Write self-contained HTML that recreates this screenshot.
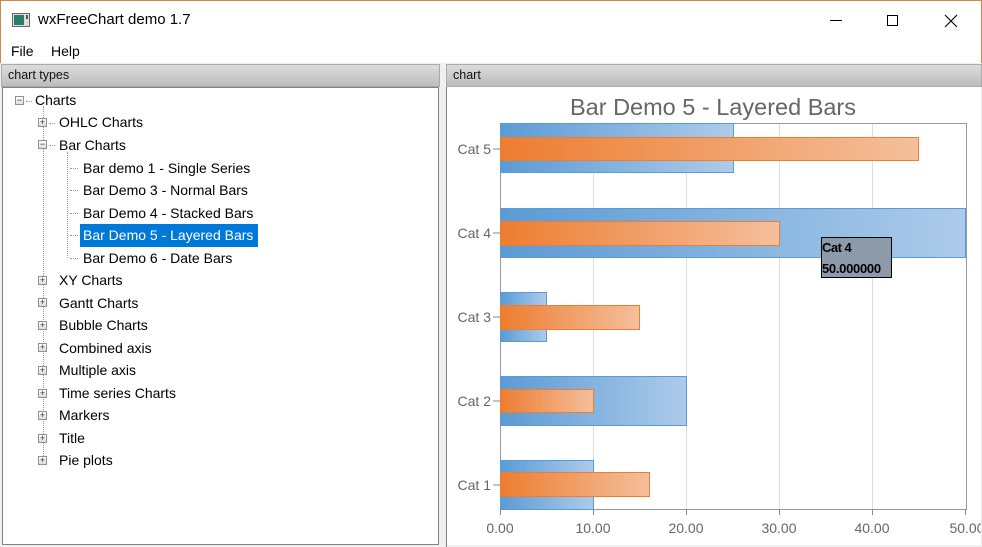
<!DOCTYPE html>
<html><head><style>
*{margin:0;padding:0;box-sizing:border-box}
body{width:982px;height:547px;overflow:hidden;background:#f0f0f0;font-family:"Liberation Sans",sans-serif;position:relative}
.title{position:absolute;left:0;top:0;width:982px;height:40px;background:#fff;border-left:1px solid #c9894f;border-top:1px solid #c9894f;border-right:1px solid #c9894f}
.menu{position:absolute;left:0;top:40px;width:982px;height:23px;background:#fff;border-left:1px solid #c9894f;border-right:1px solid #c9894f;font-size:14px}
.hdr{position:absolute;height:23px;background:linear-gradient(#dcdcdc,#bdbdbd);font-size:12.5px;color:#111;padding:3px 0 0 6px;border:1px solid #aaa}
.tree{position:absolute;left:2px;top:87px;width:437px;height:458px;background:#fff;border:1px solid #828282}
.it{position:absolute;font-size:14px;color:#000;line-height:20px;white-space:nowrap}
.bx{position:absolute;width:9px;height:9px;border:1px solid #919191;background:linear-gradient(#fff,#ddd);font-size:9px;line-height:7px;text-align:center;color:#333}
.dv{position:absolute;border-left:1px dotted #999}
.dh{position:absolute;border-top:1px dotted #999;width:8px}
</style></head><body>
<div class="title">
<svg style="position:absolute;left:11px;top:12px" width="18" height="14"><rect x="0.5" y="0.5" width="17" height="13" fill="#ddd" stroke="#666"/><rect x="2" y="2" width="10" height="10" fill="#2d7b6a"/><rect x="14" y="2" width="2" height="4" fill="#555"/></svg>
<div style="position:absolute;left:37px;top:10px;font-size:15px;color:#000">wxFreeChart demo 1.7</div>
<div style="position:absolute;left:829px;top:19px;width:12px;height:1px;background:#000"></div>
<div style="position:absolute;left:886px;top:14px;width:11px;height:11px;border:1px solid #000"></div>
<svg style="position:absolute;left:943px;top:13px" width="14" height="14"><path d="M1 1L13 13M13 1L1 13" stroke="#000" stroke-width="1.1"/></svg>
</div>
<div class="menu"><span style="position:absolute;left:10px;top:3px">File</span><span style="position:absolute;left:50px;top:3px">Help</span></div>
<div class="hdr" style="left:1px;top:64px;width:439px">chart types</div>
<div class="hdr" style="left:446px;top:64px;width:536px">chart</div>
<div class="tree">
<div style="position:absolute;left:77px;top:136px;width:178px;height:23px;background:#0078d7"></div>
</div>
<svg style="position:absolute;left:447px;top:87px" width="534" height="458">
<defs>
<linearGradient id="b" x1="0" x2="1"><stop offset="0" stop-color="#5b9bd5"/><stop offset="1" stop-color="#adcbea"/></linearGradient>
<linearGradient id="o" x1="0" x2="1"><stop offset="0" stop-color="#ed7d31"/><stop offset="1" stop-color="#f4bf9c"/></linearGradient>
</defs>
<rect width="534" height="458" fill="#fff"/>
<g transform="translate(-447,-87)" font-family="Liberation Sans,sans-serif">
<text x="713" y="115" font-size="23.5" fill="#666" text-anchor="middle">Bar Demo 5 - Layered Bars</text>
<g stroke="#ddd"><line x1="593.5" y1="123" x2="593.5" y2="509"/><line x1="686.5" y1="123" x2="686.5" y2="509"/><line x1="779.5" y1="123" x2="779.5" y2="509"/><line x1="872.5" y1="123" x2="872.5" y2="509"/></g>
<rect x="500.5" y="123.5" width="466" height="386" fill="none" stroke="#999"/>
<g stroke="#5b9bd5" fill="url(#b)">
<rect x="500.5" y="123.5" width="233" height="49"/>
<rect x="500.5" y="208.5" width="465" height="49"/>
<rect x="500.5" y="292.5" width="46" height="49"/>
<rect x="500.5" y="376.5" width="186" height="49"/>
<rect x="500.5" y="460.5" width="93" height="49"/>
</g>
<g stroke="#ed7d31" fill="url(#o)">
<rect x="500.5" y="137.5" width="418" height="23"/>
<rect x="500.5" y="221.5" width="279" height="24"/>
<rect x="500.5" y="305.5" width="139" height="24"/>
<rect x="500.5" y="389.5" width="93" height="23"/>
<rect x="500.5" y="472.5" width="149" height="24"/>
</g>
<rect x="821.5" y="237.5" width="70" height="40" fill="#8d9aaa" stroke="#000"/>
<text x="822" y="252" font-size="13" font-weight="bold" fill="#000" letter-spacing="-0.5">Cat 4</text>
<text x="822" y="273" font-size="13" font-weight="bold" fill="#000" letter-spacing="-0.3">50.000000</text>
<g font-size="14" fill="#666" text-anchor="end">
<text x="491" y="154">Cat 5</text><text x="491" y="238">Cat 4</text><text x="491" y="322">Cat 3</text><text x="491" y="406">Cat 2</text><text x="491" y="490">Cat 1</text>
</g>
<g stroke="#888"><line x1="493" y1="149" x2="500" y2="149"/><line x1="493" y1="233" x2="500" y2="233"/><line x1="493" y1="317" x2="500" y2="317"/><line x1="493" y1="401" x2="500" y2="401"/><line x1="493" y1="485" x2="500" y2="485"/>
<line x1="500.5" y1="509" x2="500.5" y2="515"/><line x1="593.5" y1="509" x2="593.5" y2="515"/><line x1="686.5" y1="509" x2="686.5" y2="515"/><line x1="779.5" y1="509" x2="779.5" y2="515"/><line x1="872.5" y1="509" x2="872.5" y2="515"/><line x1="965.5" y1="509" x2="965.5" y2="515"/></g>
<g font-size="14" fill="#666" text-anchor="middle">
<text x="500" y="533">0.00</text><text x="593" y="533">10.00</text><text x="686" y="533">20.00</text><text x="779" y="533">30.00</text><text x="872" y="533">40.00</text><text x="967" y="533">50.00</text>
</g>
</g>
</svg>
<div style="position:absolute;left:446px;top:87px;width:1px;height:460px;background:#828282"></div>
<div style="position:absolute;left:0;top:0">
<div class="dv" style="left:43px;top:106px;height:356px"></div>
<div class="dv" style="left:67px;top:152px;height:106px"></div>
<div class="bx" style="left:15px;top:96px">−</div><div class="dh" style="left:26px;top:101px;width:6px"></div>
<div class="it" style="left:35px;top:90px">Charts</div>
<div class="bx" style="left:38px;top:118px">+</div><div class="dh" style="left:49px;top:123px;width:6px"></div><div class="it" style="left:59px;top:112px">OHLC Charts</div>
<div class="bx" style="left:38px;top:140px">−</div><div class="dh" style="left:49px;top:145px;width:6px"></div><div class="it" style="left:59px;top:135px">Bar Charts</div>
<div class="dh" style="left:70px;top:168px"></div><div class="it" style="left:83px;top:158px">Bar demo 1 - Single Series</div>
<div class="dh" style="left:70px;top:190px"></div><div class="it" style="left:83px;top:180px">Bar Demo 3 - Normal Bars</div>
<div class="dh" style="left:70px;top:213px"></div><div class="it" style="left:83px;top:203px">Bar Demo 4 - Stacked Bars</div>
<div class="dh" style="left:70px;top:235px"></div><div class="it" style="left:83px;top:225px;color:#fff">Bar Demo 5 - Layered Bars</div>
<div class="dh" style="left:70px;top:258px"></div><div class="it" style="left:83px;top:248px">Bar Demo 6 - Date Bars</div>
<div class="bx" style="left:38px;top:276px">+</div><div class="it" style="left:59px;top:270px">XY Charts</div>
<div class="bx" style="left:38px;top:298px">+</div><div class="it" style="left:59px;top:293px">Gantt Charts</div>
<div class="bx" style="left:38px;top:321px">+</div><div class="it" style="left:59px;top:315px">Bubble Charts</div>
<div class="bx" style="left:38px;top:343px">+</div><div class="it" style="left:59px;top:338px">Combined axis</div>
<div class="bx" style="left:38px;top:366px">+</div><div class="it" style="left:59px;top:360px">Multiple axis</div>
<div class="bx" style="left:38px;top:389px">+</div><div class="it" style="left:59px;top:383px">Time series Charts</div>
<div class="bx" style="left:38px;top:411px">+</div><div class="it" style="left:59px;top:405px">Markers</div>
<div class="bx" style="left:38px;top:434px">+</div><div class="it" style="left:59px;top:428px">Title</div>
<div class="bx" style="left:38px;top:456px">+</div><div class="it" style="left:59px;top:450px">Pie plots</div>
</div>
</body></html>
